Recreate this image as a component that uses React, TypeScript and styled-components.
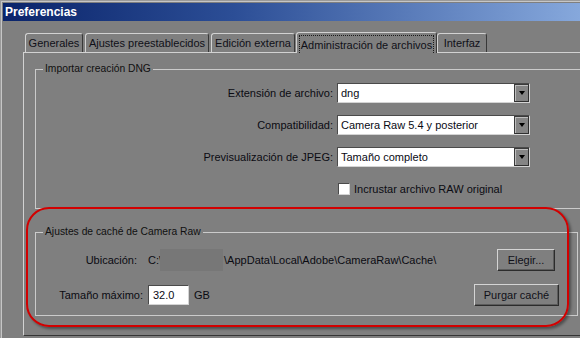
import { Fragment } from 'react';
import styled, { createGlobalStyle } from 'styled-components';

const GlobalStyle = createGlobalStyle`
  html, body {
    margin: 0;
    padding: 0;
    background: #7f7f7f;
  }
  body {
    font-family: "Liberation Sans", Arial, sans-serif;
    font-size: 11px;
    color: #0b0b12;
  }
`;

const Window = styled.div`
  position: relative;
  width: 580px;
  height: 338px;
  overflow: hidden;
  box-sizing: border-box;
  padding: 3px 0 0 3px;
  background: #7f7f7f;
  box-shadow: inset 1px 1px 0 #9a9a9a, inset 2px 2px 0 #c6c6c6;
`;

const TitleBar = styled.div`
  height: 18px;
  display: flex;
  align-items: center;
  padding-left: 2px;
  background: linear-gradient(90deg, #0a246a 0%, #2c4e96 40%, #86a8dc 100%);
  color: #fff;
  font-weight: bold;
  font-size: 12px;
`;

const Body = styled.div`
  padding: 11px 0 0 20px;
`;

const TabRow = styled.div`
  position: relative;
  z-index: 1;
  display: flex;
  align-items: flex-end;
  gap: 2px;
  height: 21px;
  margin-bottom: -1px;
  padding-left: 2px;
`;

const Tab = styled.div<{ $active?: boolean; $w: number }>`
  box-sizing: border-box;
  width: ${p => p.$w}px;
  height: ${p => (p.$active ? 21 : 19)}px;
  margin: ${p => (p.$active ? '0 -2px 0 -1px' : '0 0 1px 0')};
  padding: ${p => (p.$active ? '2px 2px 0' : '0')};
  display: flex;
  align-items: center;
  justify-content: center;
  background: #7f7f7f;
  border: 1px solid;
  border-bottom: none;
  border-color: #d2d2d2 #383838 transparent #d2d2d2;
  border-radius: 3px 3px 0 0;
  white-space: nowrap;
  color: #101018;
`;

const FocusRing = styled.span`
  flex: 1;
  align-self: stretch;
  display: flex;
  align-items: center;
  justify-content: center;
  border: 1px dotted #1a1a1a;
  border-bottom: none;
`;

const Panel = styled.div`
  width: 620px;
  box-sizing: border-box;
  border-top: 1px solid #d2d2d2;
  border-left: 1px solid #d2d2d2;
  border-bottom: 1px solid #353535;
  padding: 10px 0 19px 11px;
`;

const Group = styled.fieldset<{ $w: number; $gap?: number }>`
  box-sizing: border-box;
  width: ${p => p.$w}px;
  min-width: 0;
  margin: ${p => p.$gap ?? 0}px 0 0 0;
  padding: 0;
  border: 1px solid #cbcbcb;
`;

const Legend = styled.legend`
  margin-left: 7px;
  padding: 0 2px;
  font-size: 10.3px;
  line-height: 12px;
  color: #101010;
`;

const ImportGrid = styled.div`
  display: grid;
  grid-template-columns: 297px 193px;
  grid-auto-rows: 20px;
  column-gap: 4px;
  row-gap: 12px;
  align-items: center;
  padding: 8px 0 9px 0;
`;

const Label = styled.span<{ $pad?: number }>`
  text-align: right;
  white-space: nowrap;
  padding-right: ${p => p.$pad ?? 0}px;
`;

const Select = styled.div`
  box-sizing: border-box;
  height: 20px;
  display: flex;
  background: #fff;
  border: 1px solid;
  border-color: #4a4a4a #d4d4d4 #d4d4d4 #4a4a4a;
`;

const SelectText = styled.span`
  flex: 1;
  padding-left: 3px;
  line-height: 18px;
  color: #0a0a14;
`;

const ArrowButton = styled.span`
  box-sizing: border-box;
  width: 15px;
  display: flex;
  align-items: center;
  justify-content: center;
  background: #858585;
  border: 1px solid;
  border-color: #3a3a3a #303030 #303030 #3a3a3a;
  box-shadow: inset 1px 1px 0 #bdbdbd;
`;

const Arrow = styled.span`
  width: 0;
  height: 0;
  border-left: 3.5px solid transparent;
  border-right: 3.5px solid transparent;
  border-top: 4px solid #000;
`;

const CheckRow = styled.label`
  grid-column: 2;
  height: 14px;
  display: flex;
  align-items: center;
  gap: 4px;
  padding-left: 1px;
`;

const CheckBox = styled.span`
  box-sizing: border-box;
  width: 12px;
  height: 12px;
  background: #fff;
  border: 1px solid;
  border-color: #4a4a4a #d4d4d4 #d4d4d4 #4a4a4a;
`;

const CacheGrid = styled.div`
  display: grid;
  grid-template-columns: 107px 1fr auto;
  grid-auto-rows: 22px;
  column-gap: 5px;
  row-gap: 13px;
  align-items: center;
  padding: 11px 18px 9px 0;
`;

const PathText = styled.span`
  display: flex;
  align-items: center;
  white-space: nowrap;
`;

const Redacted = styled.span`
  display: inline-block;
  width: 63px;
  height: 22px;
  margin: 0 1px 0 -2px;
  background: #777777;
`;

const SizeField = styled.span`
  display: flex;
  align-items: center;
  gap: 5px;
`;

const NumberInput = styled.span`
  box-sizing: border-box;
  width: 41px;
  height: 20px;
  padding-left: 4px;
  line-height: 18px;
  background: #fff;
  border: 1px solid;
  border-color: #4a4a4a #d4d4d4 #d4d4d4 #4a4a4a;
  color: #0a0a14;
`;

const Button = styled.button<{ $w: number; $mr?: number }>`
  box-sizing: border-box;
  justify-self: end;
  width: ${p => p.$w}px;
  height: 22px;
  margin-right: ${p => p.$mr ?? 0}px;
  padding: 0;
  font-family: inherit;
  font-size: 11px;
  color: #101018;
  background: #7f7f7f;
  border: 1px solid;
  border-color: #d4d4d4 #2c2c2c #2c2c2c #d4d4d4;
  box-shadow: inset -1px -1px 0 #5c5c5c;
`;

const Annotation = styled.div`
  position: absolute;
  left: 26px;
  top: 207px;
  width: 543px;
  height: 120px;
  box-sizing: border-box;
  border: 2px solid #d20000;
  border-radius: 23px;
  box-shadow: 2px 2px 3px rgba(0, 0, 0, 0.4);
  pointer-events: none;
`;

const tabs = [
  { label: 'Generales', w: 58 },
  { label: 'Ajustes preestablecidos', w: 124 },
  { label: 'Edición externa', w: 84 },
  { label: 'Administración de archivos', w: 141, active: true },
  { label: 'Interfaz', w: 50 },
];

const selects = [
  { label: 'Extensión de archivo:', value: 'dng' },
  { label: 'Compatibilidad:', value: 'Camera Raw 5.4 y posterior' },
  { label: 'Previsualización de JPEG:', value: 'Tamaño completo' },
];

export default function App() {
  return (
    <>
      <GlobalStyle />
      <Window>
        <TitleBar>Preferencias</TitleBar>
        <Body>
          <TabRow>
            {tabs.map(t => (
              <Tab key={t.label} $w={t.w} $active={t.active}>
                {t.active ? <FocusRing>{t.label}</FocusRing> : t.label}
              </Tab>
            ))}
          </TabRow>
          <Panel>
            <Group $w={600}>
              <Legend>Importar creación DNG</Legend>
              <ImportGrid>
                {selects.map(s => (
                  <Fragment key={s.label}>
                    <Label>{s.label}</Label>
                    <Select>
                      <SelectText>{s.value}</SelectText>
                      <ArrowButton>
                        <Arrow />
                      </ArrowButton>
                    </Select>
                  </Fragment>
                ))}
                <CheckRow>
                  <CheckBox />
                  Incrustar archivo RAW original
                </CheckRow>
              </ImportGrid>
            </Group>
            <Group $w={543} $gap={17}>
              <Legend>Ajustes de caché de Camera Raw</Legend>
              <CacheGrid>
                <Label $pad={6}>Ubicación:</Label>
                <PathText>
                  C:\<Redacted />\AppData\Local\Adobe\CameraRaw\Cache\
                </PathText>
                <Button $w={58} $mr={4}>Elegir...</Button>
                <Label>Tamaño máximo:</Label>
                <SizeField>
                  <NumberInput>32.0</NumberInput>
                  GB
                </SizeField>
                <Button $w={85}>Purgar caché</Button>
              </CacheGrid>
            </Group>
          </Panel>
        </Body>
        <Annotation />
      </Window>
    </>
  );
}
